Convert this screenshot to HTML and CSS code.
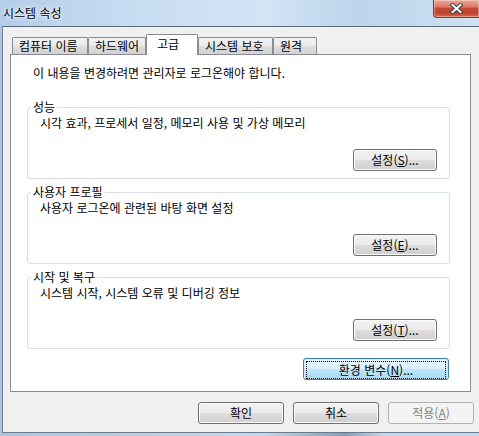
FILE: index.html
```html
<!DOCTYPE html>
<html lang="ko">
<head>
    <meta charset="UTF-8">
    <title>시스템 속성</title>
    <link rel="stylesheet" href="styles.css">
</head>
<body>
    <div class="window">
        <div class="titlebar">
            <span class="title">시스템 속성</span>
            <div class="close-btn">
                <svg width="13" height="11" viewBox="0 0 13 11">
                    <path d="M2.5 2 L10.5 9 M10.5 2 L2.5 9" stroke="#3b3f48" stroke-width="4" stroke-linecap="square"/>
                    <path d="M2.5 2 L10.5 9 M10.5 2 L2.5 9" stroke="#ffffff" stroke-width="2" stroke-linecap="square"/>
                </svg>
            </div>
        </div>

        <div class="client">
            <div class="tabs">
                <div class="tab tab-name">컴퓨터 이름</div>
                <div class="tab tab-hw">하드웨어</div>
                <div class="tab tab-adv active">고급</div>
                <div class="tab tab-prot">시스템 보호</div>
                <div class="tab tab-remote">원격</div>
            </div>

            <div class="panel">
                <p class="notice">이 내용을 변경하려면 관리자로 로그온해야 합니다.</p>

                <fieldset class="group">
                    <legend>성능</legend>
                    <p class="group-text">시각 효과, 프로세서 일정, 메모리 사용 및 가상 메모리</p>
                    <div class="group-actions">
                        <button class="btn btn-settings">설정(<u>S</u>)...</button>
                    </div>
                </fieldset>

                <fieldset class="group">
                    <legend>사용자 프로필</legend>
                    <p class="group-text">사용자 로그온에 관련된 바탕 화면 설정</p>
                    <div class="group-actions">
                        <button class="btn btn-settings">설정(<u>E</u>)...</button>
                    </div>
                </fieldset>

                <fieldset class="group">
                    <legend>시작 및 복구</legend>
                    <p class="group-text">시스템 시작, 시스템 오류 및 디버깅 정보</p>
                    <div class="group-actions">
                        <button class="btn btn-settings">설정(<u>T</u>)...</button>
                    </div>
                </fieldset>

                <div class="env-row">
                    <button class="btn btn-default btn-env"><span class="focus">환경 변수(<u>N</u>)...</span></button>
                </div>
            </div>

            <div class="dialog-buttons">
                <button class="btn btn-dialog">확인</button>
                <button class="btn btn-dialog">취소</button>
                <button class="btn btn-dialog" disabled>적용(<u>A</u>)</button>
            </div>
        </div>
    </div>
</body>
</html>
```

FILE: styles.css
```css
body {
    margin: 0;
    width: 479px;
    height: 436px;
    overflow: hidden;
    font-family: "Noto Sans CJK KR", "Noto Sans", sans-serif;
    font-size: 12px;
    line-height: 16px;
    color: #000;
}

.window {
    display: flex;
    flex-direction: column;
    height: 436px;
    background: linear-gradient(90deg, #a9c6e6 0%, #c3d9ef 55%, #7f9fc0 72%, #c0d7ee 80%, #c0d7ee 100%);
}

/* title bar */
.titlebar {
    display: flex;
    justify-content: space-between;
    align-items: flex-start;
    height: 26px;
    background: linear-gradient(90deg, #b4cde9 0%, #c9ddf2 30%, #d3e4f5 55%, #bcd4ec 75%, #cfe1f3 100%);
}

.title {
    padding: 5px 0 0 3px;
    text-shadow: 0 0 6px #fff, 0 0 3px #fff;
}

.close-btn {
    display: flex;
    align-items: center;
    justify-content: center;
    width: 45px;
    height: 17px;
    margin-right: -1px;
    border: 1px solid #7a3a32;
    border-top: none;
    border-radius: 0 0 0 4px;
    background: linear-gradient(#eba596 0%, #dc7a66 40%, #c64b35 50%, #bd412c 75%, #dc6a4d 100%);
    box-shadow: inset 0 0 0 1px rgba(255, 255, 255, 0.35);
}

/* client area */
.client {
    flex: 1;
    display: flex;
    flex-direction: column;
    margin: 0 0 3px 2px;
    padding: 7px 0 3px 7px;
    background-color: #f0f0f0;
    border-top: 1px solid #5d6a78;
    border-left: 1px solid #6e7a87;
    border-bottom: 1px solid #6e7a87;
}

.tabs {
    display: flex;
    align-items: flex-end;
    height: 20px;
    margin-left: 2px;
}

.tab {
    box-sizing: border-box;
    height: 17px;
    padding: 0 0 0 6px;
    border: 1px solid #898c95;
    border-bottom: none;
    border-radius: 2px 2px 0 0;
    background: linear-gradient(#f2f2f2 0%, #ebebeb 45%, #dddddd 55%, #d2d2d2 100%);
    white-space: nowrap;
}

.tab-name { width: 76px; }
.tab-hw { width: 58px; }
.tab-prot { width: 75px; }
.tab-remote { width: 44px; }

.tab.active {
    position: relative;
    z-index: 1;
    width: 52px;
    height: 21px;
    margin-bottom: -1px;
    padding: 1px 0 0 10px;
    background: #fff;
}

.panel {
    margin-right: 8px;
    padding: 0 20px 11px 16px;
    background-color: #fff;
    border: 1px solid #898c95;
}

.notice {
    margin: 10px 0 18px 6px;
}

/* group boxes */
.group {
    margin: 0 0 5px 0;
    padding: 0 12px 7px 3px;
    border: 1px solid #d5dfe5;
    border-radius: 3px;
}

.group legend {
    padding: 0 2px;
}

.group-text {
    margin: 0;
    padding-left: 9px;
}

.group-actions {
    display: flex;
    justify-content: flex-end;
    margin-top: 18px;
}

.env-row {
    display: flex;
    justify-content: flex-end;
    margin-top: 9px;
    margin-right: 1px;
}

/* buttons */
.btn {
    box-sizing: border-box;
    height: 22px;
    padding: 0;
    font-family: inherit;
    font-size: 12px;
    line-height: 16px;
    color: #000;
    border: 1px solid #707070;
    border-radius: 3px;
    background: linear-gradient(#f2f2f2 0%, #ebebeb 48%, #dddddd 52%, #cfcfcf 100%);
    box-shadow: inset 0 0 0 1px #fbfbfb;
}

.btn u {
    text-decoration-thickness: 1px;
}

.btn-settings {
    width: 84px;
}

.btn-default {
    border-color: #3c7fb1;
    background: linear-gradient(#eaf6fd 0%, #d9f0fc 48%, #bee6fd 52%, #a7d9f5 100%);
    box-shadow: inset 0 0 0 1px #cfeaf8;
}

.btn-env {
    width: 146px;
    padding: 2px;
}

.btn-env .focus {
    display: block;
    height: 16px;
    border: 1px dotted #000;
}

.dialog-buttons {
    display: flex;
    justify-content: flex-end;
    gap: 9px;
    margin-top: 10px;
    padding-right: 5px;
}

.btn-dialog {
    width: 86px;
}

.btn-dialog:disabled {
    color: #838383;
    border-color: #adb2b5;
    background: #f4f4f4;
    box-shadow: none;
}
```
